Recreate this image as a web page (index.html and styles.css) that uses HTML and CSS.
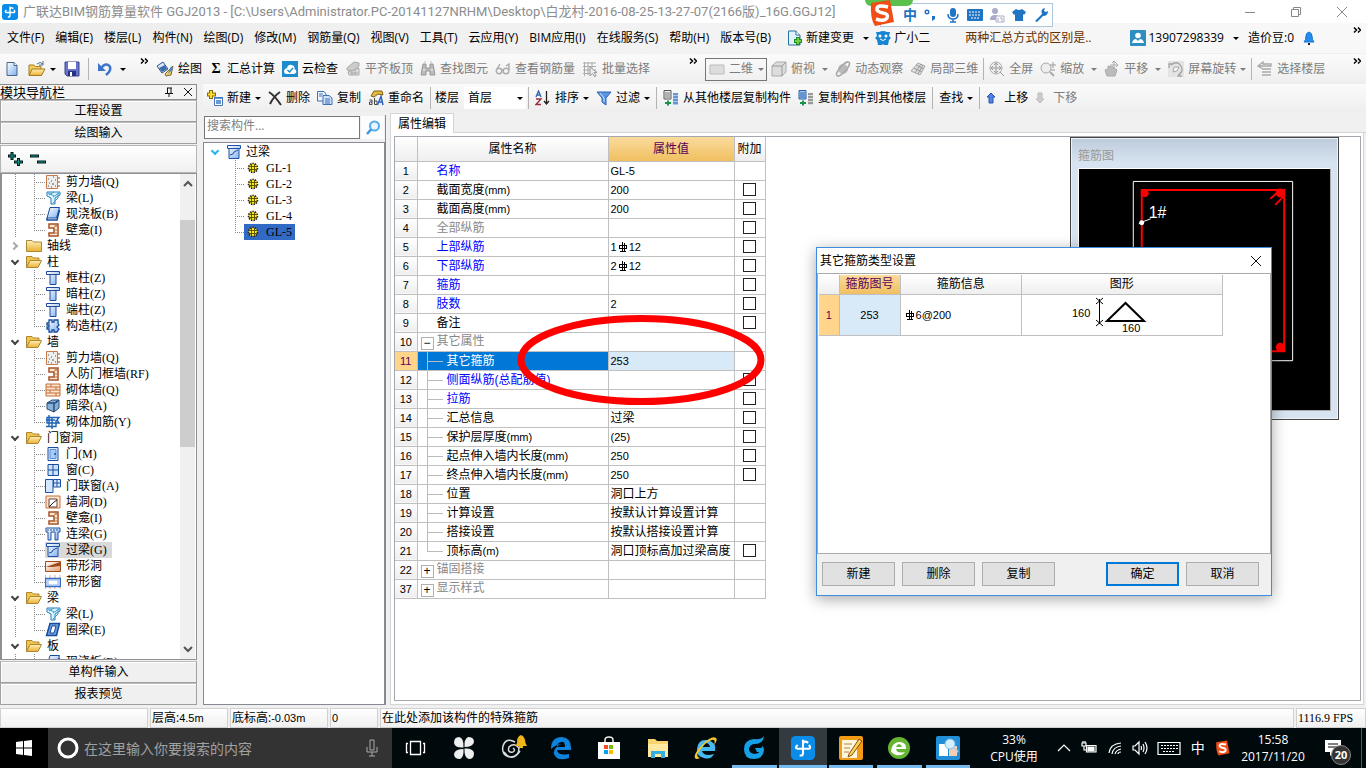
FILE: index.html
```html
<!DOCTYPE html>
<html lang="zh-CN">
<head>
<meta charset="utf-8">
<title>广联达BIM钢筋算量软件 GGJ2013</title>
<link rel="stylesheet" href="styles.css">
</head>
<body>
<svg class="sprite" aria-hidden="true">
<defs>
<linearGradient id="gBlue" x1="0" x2="1" y1="0" y2="1"><stop offset="0" stop-color="#fff"/><stop offset="1" stop-color="#7fb0f0"/></linearGradient>
<linearGradient id="gGold" x1="0" x2="0" y1="0" y2="1"><stop offset="0" stop-color="#fff0b8"/><stop offset="1" stop-color="#eab030"/></linearGradient>
<linearGradient id="gOrange" x1="0" x2="1" y1="0" y2="1"><stop offset="0" stop-color="#fff"/><stop offset="1" stop-color="#e0a070"/></linearGradient>
</defs>
<symbol id="logo" viewBox="0 0 16 16"><rect width="16" height="16" rx="3" fill="#0a8ce8"/><path d="M8 2.5V11.5Q8 13.5 5.8 12.8M11.5 4.5Q8 2.5 8 6M4.500 6Q2 8 4.500 8.500H12Q13.500 8 12 6" fill="none" stroke="#fff" stroke-width="1.4"/></symbol>
<symbol id="new" viewBox="0 0 16 16"><path d="M3 1.500H10L13 4.500V14.500H3Z" fill="url(#gBlue)" stroke="#4a6484"/><path d="M10 1.500V4.500H13" fill="#fff" stroke="#4a6484"/></symbol>
<symbol id="open" viewBox="0 0 18 16"><path d="M1 14V4H6L7.500 5.500H13V8" fill="#f4cf63" stroke="#a77a1d"/><path d="M1 14.500L4 8H17L13.500 14.500Z" fill="url(#gGold)" stroke="#a77a1d"/><path d="M9 3Q12 0 15 3M15 0V4H11" fill="none" stroke="#4b718c"/></symbol>
<symbol id="save" viewBox="0 0 16 16"><path d="M1 1H15V15H3L1 13Z" fill="#6673c8" stroke="#3d458e"/><path d="M4 1H12V8H4Z" fill="#fff"/><path d="M4 10H12V15H4Z" fill="#27307c"/><path d="M6 11H8V15H6Z" fill="#fff"/></symbol>
<symbol id="undo" viewBox="0 0 16 16"><path d="M4 7Q9 1 12.500 5Q15 9 9 14" fill="none" stroke="#3c74cc" stroke-width="2.500"/><path d="M1 2L1 10H9Z" fill="#3c74cc"/></symbol>
<symbol id="paint" viewBox="0 0 18 16"><path d="M1 5L7 1L12 8L6 12Z" fill="#dce7f5" stroke="#2c558c"/><path d="M3 7L9 4L11 8L6 11Z" fill="#3d6cac"/><path d="M9 13L17 5L15 14L10 15Z" fill="#f0cf60" stroke="#7b6840"/><path d="M15 5L17 8L12 13Z" fill="#4c84ca"/></symbol>
<symbol id="cloud" viewBox="0 0 16 16"><rect width="16" height="16" fill="#1d8bcc"/><path d="M4 13Q1 12 2.500 8.500Q4 7 5 7Q6 3 10 4Q13 5 12.500 8Q15 9 14 12L12 13Z" fill="#fff"/><path d="M5.500 9L7.500 11L11 7" fill="none" stroke="#1d8bcc" stroke-width="1.500"/></symbol>
<symbol id="align" viewBox="0 0 16 16"><path d="M2 7L9 1L14 2V5L8 10L2 9Z" fill="#ccc" stroke="#aaa"/><path d="M3 11L14 7V14H4Z" fill="#ddd" stroke="#aaa"/><path d="M5 12H13M7 10V14M10 9V14" stroke="#aaa"/></symbol>
<symbol id="binoc" viewBox="0 0 16 16"><path d="M3 3H6V7H10V3H13L15 14H10V10H6V14H1Z" fill="#bbb" stroke="#999"/><path d="M3 9H5M11 9H13M4 1H6M10 1H12" stroke="#ddd" stroke-width="2"/></symbol>
<symbol id="glasses" viewBox="0 0 16 16"><g fill="none" stroke="#aaa" stroke-width="1.400"><circle cx="4" cy="10" r="2.800"/><circle cx="11" cy="10" r="2.800"/><path d="M7 9H8M2 8L5 3M14 9V3L11 5"/></g></symbol>
<symbol id="batch" viewBox="0 0 16 16"><path d="M1 2H14M1 5.500H14M1 9H14M1 12.500H8M2.500 1V15M6 1V14M10 1V9" stroke="#aaa" fill="none"/><path d="M8 6V15L10.500 12.500L13 16L14 14L12 11.500H15Z" fill="#eee" stroke="#999"/></symbol>
<symbol id="rect" viewBox="0 0 16 16"><path d="M1 4H15V13H1Z" fill="#ddd" stroke="#bbb"/></symbol>
<symbol id="cube" viewBox="0 0 16 16"><path d="M1 5L5 1H15V11L11 15H1Z" fill="#ddd" stroke="#aaa"/><path d="M1 5H11V15M11 5L15 1" fill="none" stroke="#999"/></symbol>
<symbol id="orbit" viewBox="0 0 16 16"><circle cx="8" cy="8" r="5" fill="#bbb"/><ellipse cx="8" cy="8" rx="9" ry="3" transform="rotate(-48 8 8)" fill="none" stroke="#aaa" stroke-width="1.500"/></symbol>
<symbol id="local" viewBox="0 0 16 16"><path d="M1 10L8 2L15 5L10 14Z" fill="#ddd" stroke="#aaa"/><path d="M4 7L12 11M6 4L14 8M5 12L11 3M8 13L13 4" stroke="#999"/></symbol>
<symbol id="full" viewBox="0 0 16 16"><circle cx="7" cy="7" r="6" fill="#eee" stroke="#aaa"/><path d="M7 2V12M2 7H12M5 4L7 2L9 4M5 10L7 12L9 10M4 5L2 7L4 9M10 5L12 7L10 9M11 11L15 15" fill="none" stroke="#999"/></symbol>
<symbol id="zoomi" viewBox="0 0 16 16"><circle cx="6" cy="7" r="5" fill="#eee" stroke="#aaa"/><path d="M10 11L14 15" stroke="#aaa" stroke-width="2"/><path d="M13 1V7M10 4H16M11 9H15" stroke="#999"/></symbol>
<symbol id="pan" viewBox="0 0 16 16"><path d="M3 15L1 9L4 8L4 5L9 6L13 9L11 15Z" fill="#bbb" stroke="#aaa"/><path d="M10 0V8M6 4H14M8 2L10 0L12 2M12 2L14 4L12 6" fill="none" stroke="#aaa"/></symbol>
<symbol id="rotate" viewBox="0 0 16 16"><rect width="16" height="16" fill="#e4e4e4"/><path d="M3 4Q9-1 13 5Q16 11 10 14M1 7V3H5M13 11L10 15H14" fill="none" stroke="#a4a4a4" stroke-width="1.300"/><path d="M6 6L11 6L9 10L5 11Z" fill="#f4f4f4" stroke="#aaa"/></symbol>
<symbol id="floors" viewBox="0 0 16 16"><path d="M2 5H14V3H6V1L1 5L6 8M5 8H14M5 11H14M5 14H14" fill="none" stroke="#aaa" stroke-width="1.400"/></symbol>
<symbol id="newcomp" viewBox="0 0 16 16"><path d="M4 0V9M0 4.500H9" stroke="#8a6a10" stroke-width="4"/><path d="M4 1V8M1 4.500H8" stroke="#ffdc30" stroke-width="2"/><path d="M7.500 7.500H15.500V15.500H7.500Z" fill="#fff" stroke="#4677b8"/><path d="M7 8H16M9 11H14M9 13H14" stroke="#3d78c6" stroke-width="1.500"/></symbol>
<symbol id="del" viewBox="0 0 14 16"><path d="M1 2Q7 6 13 15M12 2Q6 6 2 14" fill="none" stroke="#333" stroke-width="2"/></symbol>
<symbol id="copy" viewBox="0 0 16 16"><path d="M.5 1.500H7L9 4V11H.5Z" fill="#eef4ff" stroke="#3e70b4"/><path d="M6 5.500H12L15 8V14.500H6Z" fill="#cfe1fb" stroke="#3e70b4"/><path d="M2 4H6M2 6H5M8 9H13M8 11H13M8 13H13" stroke="#3e70b4"/></symbol>
<symbol id="rename" viewBox="0 0 16 16"><path d="M3 6L6 1H14L15 5L10 4L6 7Z" fill="#e4bc42" stroke="#806010"/><path d="M1.500 10H4V14.500H1.500V12H4M6.500 8V14.500H9V11H6.500" fill="none" stroke="#444"/><path d="M9.500 15L13 6.500L15 15M11 12H15" fill="none" stroke="#2c62c4" stroke-width="1.500"/></symbol>
<symbol id="az" viewBox="0 0 16 16"><path d="M1 7L3.500 1L6 7M2 5H5" fill="none" stroke="#3968a8" stroke-width="1.400"/><path d="M1 9H6L1 14.500H6" fill="none" stroke="#98303e" stroke-width="1.400"/><path d="M11.500 1V14M9 11L11.500 14L14 11" fill="none" stroke="#222" stroke-width="1.300"/></symbol>
<symbol id="filter" viewBox="0 0 16 16"><path d="M1 2H15L10 8V15L6 12V8Z" fill="#5b95e0" stroke="#2c62b4"/><path d="M4 3L8 8V12" stroke="#cfe4ff" fill="none"/></symbol>
<symbol id="cfrom" viewBox="0 0 16 16"><path d="M1 .5H8V9H1Z" fill="#eee" stroke="#555"/><path d="M2 3H7M2 5H7M2 7H7" stroke="#777"/><path d="M2 13H8M5 10.500V15.500" stroke="#19964b" stroke-width="2"/><path d="M10 3H15V15H10Z" fill="#a9caf4"/><path d="M10 4H15M10 7H15M10 10H15M10 13H15" stroke="#245fad"/></symbol>
<symbol id="cto" viewBox="0 0 16 16"><path d="M1 .5H8V9H1Z" fill="#a9caf4" stroke="#245fad"/><path d="M2 3H7M2 5H7M2 7H7" stroke="#245fad"/><path d="M2 13H8M5 10.500V15.500" stroke="#19964b" stroke-width="2"/><path d="M10 3H15V15H10Z" fill="#ddd"/><path d="M10 4H15M10 7H15M10 10H15M10 13H15" stroke="#555"/></symbol>
<symbol id="up" viewBox="0 0 10 12"><path d="M5 1L9 5H7V11H3V5H1Z" fill="#4e82e8" stroke="#2552b0"/></symbol>
<symbol id="down" viewBox="0 0 10 12"><path d="M5 11L9 7H7V1H3V7H1Z" fill="#ccc" stroke="#bbb"/></symbol>
<symbol id="change" viewBox="0 0 16 16"><path d="M1.500 1H9L13 5V15H1.500Z" fill="#dff1ff" stroke="#2b6f9c"/><path d="M9 1V5H13" fill="#fff" stroke="#2b6f9c"/><path d="M11 7V15M7 11H15" stroke="#238b23" stroke-width="4"/><path d="M11 8V14M8 11H14" stroke="#70cf45" stroke-width="2"/></symbol>
<symbol id="owl" viewBox="0 0 16 16"><path d="M1 2L4 2Q8 0 12 2L15 2L14 6L16 8L14 10L13 15H9L8 14L7 15H3L2 10L0 8L2 6Z" fill="#1686d3"/><circle cx="5" cy="6" r="1.500" fill="#fff"/><circle cx="11" cy="6" r="1.500" fill="#fff"/><path d="M5 9Q8 12 11 9" fill="none" stroke="#fff"/></symbol>
<symbol id="user" viewBox="0 0 16 16"><rect width="16" height="16" rx="1" fill="#2d8ec2"/><circle cx="8" cy="5.500" r="2.800" fill="#fff"/><path d="M2 13Q3 9 6 9L8 11L10 9Q13 9 14 13Z" fill="#fff"/></symbol>
<symbol id="bell" viewBox="0 0 12 16"><path d="M1 12Q3 10 3 6Q3 3 6 2Q9 3 9 6Q9 10 11 12Z" fill="#258cf0" stroke="#1772d2"/><path d="M5 13H7V15H5Z" fill="#222"/></symbol>
<symbol id="folder" viewBox="0 0 16 16"><path d="M.5 13.500V2.500H6L7.500 4H15.500V13.500Z" fill="url(#gGold)" stroke="#a98934"/></symbol>
<symbol id="folderopen" viewBox="0 0 16 16"><path d="M.5 13.500V2.500H6L7.500 4H13V7" fill="#f2c44c" stroke="#a98934"/><path d="M.5 13.500L4 6.500H15.500L12 13.500Z" fill="url(#gGold)" stroke="#a98934"/></symbol>
<symbol id="wall" viewBox="0 0 16 16"><path d="M1.500 1.500H12.500V14.500H1.500Z" fill="#eee" stroke="#c77b48"/><path d="M13 4H15M13 8H15M13 12H15" stroke="#d07b3e" stroke-width="1.500"/><path d="M3 5H4M8 3H9M6 7H7M10 6H11M4 9H5M7 10H9M10 12H11M3 12H4M6 13H7" stroke="#555"/></symbol>
<symbol id="beam" viewBox="0 0 16 16"><path d="M2 2H15V5L10 8V14H6V8L2 6Z" fill="#dff2ff" stroke="#237eb9"/><path d="M4 5L9 2M8 7L14 3M8 13L13 8V3M3 3L9 6" stroke="#3a9ad4" fill="none"/></symbol>
<symbol id="slab" viewBox="0 0 16 16"><path d="M5 1.500H14.500L11.500 12H2Z" fill="url(#gBlue)" stroke="#164d9e"/><path d="M2 12V14H12L14.500 4" fill="none" stroke="#164d9e" stroke-width="1.500"/></symbol>
<symbol id="niche" viewBox="0 0 16 16"><path d="M4 2H13V14H4V11H9V6H4Z" fill="#f8e9da" stroke="#a95324" stroke-width="1.500"/><path d="M9 4H13M9 8H13M9 11H13M11 2V5" stroke="#bd7443"/></symbol>
<symbol id="column" viewBox="0 0 16 16"><path d="M1.500 1.500H14.500V4.500H11V14.500H5V4.500H1.500Z" fill="url(#gBlue)" stroke="#204a9a"/><path d="M2 4.500H14" stroke="#204a9a"/></symbol>
<symbol id="gcol" viewBox="0 0 16 16"><path d="M4 2H7V4H9V2H13V5L14 7L12 9L14 11L12 14H9V12H7V14H4V11H2V9H4V7H2V5H4Z" fill="url(#gBlue)" stroke="#164d9e" stroke-width="1.300"/></symbol>
<symbol id="brick" viewBox="0 0 16 16"><path d="M1 2H15V14H1Z" fill="#fbe4d0" stroke="#c56e38"/><path d="M1 5H15M1 8H15M1 11H15M6 2V5M11 5V8M5 8V11M11 11V14" stroke="#c56e38"/></symbol>
<symbol id="dbeam" viewBox="0 0 16 16"><path d="M2 5L7 2H14L11 5ZM2 5H9V14L2 11ZM9 5L14 2V10L9 14Z" fill="#8ab0d8" stroke="#244d7d"/></symbol>
<symbol id="rwall" viewBox="0 0 16 16"><path d="M2 3.500H14L12 6L14 9H2ZM4 1V12M1 12.500H11V6M7 3V15M1 6H10" fill="none" stroke="#1c62b4" stroke-width="1.400"/></symbol>
<symbol id="door" viewBox="0 0 16 16"><path d="M3 1.500H13V14.500H3Z" fill="#dceaff" stroke="#164d9e"/><path d="M5 3.500H11V12.500H5Z" fill="#a7cbfa" stroke="#5f91d4"/><circle cx="10" cy="8" r="1" fill="#164d9e"/></symbol>
<symbol id="window" viewBox="0 0 16 16"><path d="M3 2.500H13.500V13.500H3Z" fill="#cfe2fd" stroke="#164d9e"/><path d="M8 3V13M3 8H13" stroke="#164d9e"/></symbol>
<symbol id="doorwin" viewBox="0 0 16 16"><path d="M.5 1.500H8V14.500H.5ZM8.500 1.500H15.500V9H8.500Z" fill="#d5e7ff" stroke="#1e50a5"/><path d="M12 1V9M9 5H15" fill="none" stroke="#1e50a5"/></symbol>
<symbol id="hole" viewBox="0 0 16 16"><path d="M1 2H15V14H1Z" fill="#fbe4d0" stroke="#c56e38"/><path d="M4 5H12V13H4Z" fill="#fff" stroke="#6c4230"/><path d="M4 13L9 8L12 6" fill="none" stroke="#222"/></symbol>
<symbol id="link" viewBox="0 0 16 16"><path d="M1 2H15V6H13V14H10V6H6V14H3V6H1Z" fill="url(#gBlue)" stroke="#1e50a5"/><path d="M2 4H14" stroke="#1e50a5" stroke-dasharray="2 1"/></symbol>
<symbol id="lintel" viewBox="0 0 16 16"><path d="M1.500 1.500H14.500V4.500H13V14.500H3V4.500H1.500Z" fill="url(#gBlue)" stroke="#1e50a5"/><path d="M2 4.500H14M4 11L7 10L8 8L12 6" fill="none" stroke="#1e50a5"/></symbol>
<symbol id="shole" viewBox="0 0 16 16"><path d="M.5 3.500H15.500V13.500H.5Z" fill="url(#gOrange)" stroke="#a14b1c"/><path d="M1 9L15 4V8L7 9Z" fill="#9e481d"/></symbol>
<symbol id="swin" viewBox="0 0 16 16"><path d="M.5 1V15M5 1V15M10 1V15M15 1V15" stroke="#f1aa92"/><path d="M.5 4.500H15.500V12.500H.5Z" fill="#dceaff" stroke="#386cc4" stroke-width="1.500"/><path d="M3 6H13V11H3Z" fill="#fff" stroke="#8ab3f0"/></symbol>
<symbol id="ring" viewBox="0 0 16 16"><path d="M5 1.500H14.500L11.500 13.500H1.500Z" fill="#6e9cdc" stroke="#164d9e" stroke-width="1.500"/><path d="M7 4H11L9 11H5Z" fill="#fff" stroke="#164d9e"/></symbol>
<symbol id="gear" viewBox="0 0 12 12"><circle cx="6" cy="6" r="4.500" fill="#ffee20" stroke="#222" stroke-width="1.600" stroke-dasharray="1.500 1"/><path d="M4.500 2V10M7.500 2V10M2 4.500H10M2 7.500H10" stroke="#5c5500"/></symbol>
<symbol id="rebar" viewBox="0 0 10 12"><path d="M1.500 4.500H8.500V7.500H1.500ZM4.500 1V10M6.500 2V10M2 10.500H8" fill="none" stroke="#000" shape-rendering="crispEdges"/></symbol>
<symbol id="sogou" viewBox="0 0 28 28"><path d="M4 4L23 1L27 23L8 27Q3 20 4 4Z" fill="#f04e16"/><path d="M21 8Q9 5 10 11Q11 13 16 14Q22 15 20 19Q17 23 9 20" fill="none" stroke="#fff" stroke-width="3.500"/></symbol>
</svg>

<header class="titlebar">
  <svg class="i16"><use href="#logo"/></svg>
  <h1>广联达BIM钢筋算量软件 GGJ2013 - [C:\Users\Administrator.PC-20141127NRHM\Desktop\白龙村-2016-08-25-13-27-07(2166版)_16G.GGJ12]</h1>
  <div class="winbtns">
    <button aria-label="最小化"><svg viewBox="0 0 12 12"><path d="M1 6.500H11"/></svg></button>
    <button aria-label="还原"><svg viewBox="0 0 12 12"><path d="M1.500 3.500H8.500V10.500H1.500ZM3.500 3V1.500H10.500V8.500H9"/></svg></button>
    <button aria-label="关闭"><svg viewBox="0 0 12 12"><path d="M1 1L11 11M11 1L1 11"/></svg></button>
  </div>
</header>

<nav class="menubar">
  <button>文件(F)</button><button>编辑(E)</button><button>楼层(L)</button><button>构件(N)</button><button>绘图(D)</button><button>修改(M)</button><button>钢筋量(Q)</button><button>视图(V)</button><button>工具(T)</button><button>云应用(Y)</button><button>BIM应用(I)</button><button>在线服务(S)</button><button>帮助(H)</button><button>版本号(B)</button>
  <button class="change"><svg class="i16"><use href="#change"/></svg>新建变更<span class="caret wide"></span></button>
  <button><svg class="i16"><use href="#owl"/></svg>广小二</button>
  <a class="tip" href="#">两种汇总方式的区别是..</a>
  <div class="account">
    <button><svg class="i16"><use href="#user"/></svg>13907298339<span class="caret wide"></span></button>
    <span>造价豆:0</span>
    <button aria-label="通知"><svg class="bell"><use href="#bell"/></svg></button>
  </div>
  <button class="more" aria-label="更多"><svg viewBox="0 0 8 6"><path d="M1 .5L3.500 3L1 5.500M5 .5L7.500 3L5 5.500"/></svg></button>
</nav>

<div class="toolbar main-tools">
  <div class="group files">
    <button aria-label="新建"><svg class="i16"><use href="#new"/></svg></button>
    <button aria-label="打开"><svg class="i18"><use href="#open"/></svg><span class="caret"></span></button>
    <button aria-label="保存"><svg class="i16"><use href="#save"/></svg></button>
    <span class="sep"></span>
    <button aria-label="撤销"><svg class="i16"><use href="#undo"/></svg><span class="caret wide"></span></button>
    <button class="more" aria-label="更多"><svg viewBox="0 0 8 6"><path d="M1 .5L3.500 3L1 5.500M5 .5L7.500 3L5 5.500"/></svg></button>
  </div>
  <div class="group edit">
    <button><svg class="i18"><use href="#paint"/></svg>绘图</button>
    <button><b class="sigma">Σ</b>汇总计算</button>
    <button><svg class="i16"><use href="#cloud"/></svg>云检查</button>
    <button disabled><svg class="i16"><use href="#align"/></svg>平齐板顶</button>
    <button disabled><svg class="i16"><use href="#binoc"/></svg>查找图元</button>
    <button disabled><svg class="i16"><use href="#glasses"/></svg>查看钢筋量</button>
    <button disabled><svg class="i16"><use href="#batch"/></svg>批量选择</button>
    <button class="more" aria-label="更多"><svg viewBox="0 0 8 6"><path d="M1 .5L3.500 3L1 5.500M5 .5L7.500 3L5 5.500"/></svg></button>
  </div>
  <div class="group view">
    <label class="viewsel"><svg class="i16"><use href="#rect"/></svg><select disabled aria-label="视图模式"><option>二维</option></select><span class="caret"></span></label>
    <button disabled><svg class="i16"><use href="#cube"/></svg>俯视<span class="caret wide"></span></button>
    <button disabled><svg class="i16"><use href="#orbit"/></svg>动态观察</button>
    <button disabled><svg class="i16"><use href="#local"/></svg>局部三维</button>
    <span class="sep"></span>
    <button disabled><svg class="i16"><use href="#full"/></svg>全屏</button>
    <button disabled><svg class="i16"><use href="#zoomi"/></svg>缩放<span class="caret wide"></span></button>
    <button disabled><svg class="i16"><use href="#pan"/></svg>平移<span class="caret wide"></span></button>
    <button disabled><svg class="i16"><use href="#rotate"/></svg>屏幕旋转<span class="caret"></span></button>
    <span class="sep"></span>
    <button disabled><svg class="i16"><use href="#floors"/></svg>选择楼层</button>
    <button class="more" aria-label="更多"><svg viewBox="0 0 8 6"><path d="M1 .5L3.500 3L1 5.500M5 .5L7.500 3L5 5.500"/></svg></button>
  </div>
</div>

<main class="workspace">
  <aside class="modules">
    <div class="panel-head"><h2>模块导航栏</h2>
      <button aria-label="固定"><svg viewBox="0 0 10 10"><path d="M3.500 1V6M7 1V6M3 1H8M1 6.500H9M5 7V10"/></svg></button>
      <button aria-label="关闭"><svg viewBox="0 0 10 10"><path d="M1 1L9 9M9 1L1 9"/></svg></button>
    </div>
    <button class="section">工程设置</button>
    <button class="section">绘图输入</button>
    <div class="tree-tools">
      <button aria-label="全部展开"><svg viewBox="0 0 16 16"><path d="M5 1V9M1 5H9M11.500 7V15M7 11H16" stroke="#001a1a" stroke-width="3"/><path d="M5 2V8M2 5H8M11.500 8V14M8 11H15" stroke="#14918a"/></svg></button>
      <button aria-label="全部折叠"><svg viewBox="0 0 16 16"><path d="M0 5H9M7 11H16" stroke="#001a1a" stroke-width="3"/><path d="M1 5H8M8 11H15" stroke="#14918a"/></svg></button>
    </div>
    <div class="tree-box">
      <ul class="tree">
        <li class="leaf"><svg><use href="#wall"/></svg>剪力墙(Q)</li>
        <li class="leaf"><svg><use href="#beam"/></svg>梁(L)</li>
        <li class="leaf"><svg><use href="#slab"/></svg>现浇板(B)</li>
        <li class="leaf last"><svg><use href="#niche"/></svg>壁龛(I)</li>
        <li class="branch closed"><i></i><svg><use href="#folder"/></svg>轴线</li>
        <li class="branch"><i></i><svg><use href="#folderopen"/></svg>柱</li>
        <li class="leaf"><svg><use href="#column"/></svg>框柱(Z)</li>
        <li class="leaf"><svg><use href="#column"/></svg>暗柱(Z)</li>
        <li class="leaf"><svg><use href="#column"/></svg>端柱(Z)</li>
        <li class="leaf last"><svg><use href="#gcol"/></svg>构造柱(Z)</li>
        <li class="branch"><i></i><svg><use href="#folderopen"/></svg>墙</li>
        <li class="leaf"><svg><use href="#wall"/></svg>剪力墙(Q)</li>
        <li class="leaf"><svg><use href="#niche"/></svg>人防门框墙(RF)</li>
        <li class="leaf"><svg><use href="#brick"/></svg>砌体墙(Q)</li>
        <li class="leaf"><svg><use href="#dbeam"/></svg>暗梁(A)</li>
        <li class="leaf last"><svg><use href="#rwall"/></svg>砌体加筋(Y)</li>
        <li class="branch"><i></i><svg><use href="#folderopen"/></svg>门窗洞</li>
        <li class="leaf"><svg><use href="#door"/></svg>门(M)</li>
        <li class="leaf"><svg><use href="#window"/></svg>窗(C)</li>
        <li class="leaf"><svg><use href="#doorwin"/></svg>门联窗(A)</li>
        <li class="leaf"><svg><use href="#hole"/></svg>墙洞(D)</li>
        <li class="leaf"><svg><use href="#niche"/></svg>壁龛(I)</li>
        <li class="leaf"><svg><use href="#link"/></svg>连梁(G)</li>
        <li class="leaf"><span class="current"><svg><use href="#lintel"/></svg>过梁(G)</span></li>
        <li class="leaf"><svg><use href="#shole"/></svg>带形洞</li>
        <li class="leaf last"><svg><use href="#swin"/></svg>带形窗</li>
        <li class="branch"><i></i><svg><use href="#folderopen"/></svg>梁</li>
        <li class="leaf"><svg><use href="#beam"/></svg>梁(L)</li>
        <li class="leaf last"><svg><use href="#ring"/></svg>圈梁(E)</li>
        <li class="branch"><i></i><svg><use href="#folderopen"/></svg>板</li>
        <li class="leaf"><svg><use href="#slab"/></svg>现浇板(B)</li>
      </ul>
      <div class="scroll"><svg viewBox="0 0 10 8"><path d="M1 6L5 2L9 6"/></svg><div class="thumb"></div><svg viewBox="0 0 10 8"><path d="M1 2L5 6L9 2"/></svg></div>
    </div>
    <button class="section">单构件输入</button>
    <button class="section">报表预览</button>
  </aside>

  <div class="content">
    <div class="toolbar comp-tools">
      <button><svg class="i16"><use href="#newcomp"/></svg>新建<span class="caret"></span></button>
      <button><svg class="i14"><use href="#del"/></svg>删除</button>
      <button><svg class="i16"><use href="#copy"/></svg>复制</button>
      <button><svg class="i16"><use href="#rename"/></svg>重命名</button>
      <span class="sep"></span>
      <label class="floor">楼层<span class="combo"><select aria-label="楼层"><option>首层</option></select><span class="caret"></span></span></label>
      <span class="sep"></span>
      <button><svg class="i16"><use href="#az"/></svg>排序<span class="caret"></span></button>
      <button><svg class="i16"><use href="#filter"/></svg>过滤<span class="caret"></span></button>
      <span class="sep"></span>
      <button><svg class="i16"><use href="#cfrom"/></svg>从其他楼层复制构件</button>
      <button><svg class="i16"><use href="#cto"/></svg>复制构件到其他楼层</button>
      <span class="sep"></span>
      <button>查找<span class="caret"></span></button>
      <span class="sep"></span>
      <button class="move"><svg><use href="#up"/></svg>上移</button>
      <button class="move" disabled><svg><use href="#down"/></svg>下移</button>
    </div>
    <div class="panes">
      <section class="components">
        <div class="search"><input type="text" placeholder="搜索构件..." aria-label="搜索构件"><button aria-label="搜索"><svg viewBox="0 0 16 16"><circle cx="9.500" cy="6" r="4.500" fill="#eaf6ff" stroke="#55ace8" stroke-width="2"/><path d="M6 9.500L2 14" stroke="#3a94dc" stroke-width="2.500"/></svg></button></div>
        <ul class="comp-tree">
          <li class="root"><i></i><svg><use href="#lintel"/></svg>过梁</li>
          <li><span><svg><use href="#gear"/></svg>GL-1</span></li>
          <li><span><svg><use href="#gear"/></svg>GL-2</span></li>
          <li><span><svg><use href="#gear"/></svg>GL-3</span></li>
          <li><span><svg><use href="#gear"/></svg>GL-4</span></li>
          <li class="last"><span class="sel"><svg><use href="#gear"/></svg>GL-5</span></li>
        </ul>
      </section>
      <section class="editor">
        <div class="tabs"><button class="tab">属性编辑</button></div>
        <div class="sheet"><div class="sheet-in">
          <table class="props">
            <colgroup><col class="c-no"><col class="c-name"><col class="c-val"><col class="c-add"></colgroup>
            <thead><tr><th></th><th>属性名称</th><th class="hot">属性值</th><th>附加</th></tr></thead>
            <tbody>
              <tr><th>1</th><td class="n blue">名称</td><td>GL-5</td><td></td></tr>
              <tr><th>2</th><td class="n">截面宽度<small>(mm)</small></td><td>200</td><td><input type="checkbox" aria-label="附加 2"></td></tr>
              <tr><th>3</th><td class="n">截面高度<small>(mm)</small></td><td>200</td><td><input type="checkbox" aria-label="附加 3"></td></tr>
              <tr><th>4</th><td class="n gray">全部纵筋</td><td></td><td><input type="checkbox" aria-label="附加 4"></td></tr>
              <tr><th>5</th><td class="n blue">上部纵筋</td><td>1<svg class="rebar"><use href="#rebar"/></svg>12</td><td><input type="checkbox" aria-label="附加 5"></td></tr>
              <tr><th>6</th><td class="n blue">下部纵筋</td><td>2<svg class="rebar"><use href="#rebar"/></svg>12</td><td><input type="checkbox" aria-label="附加 6"></td></tr>
              <tr><th>7</th><td class="n blue">箍筋</td><td></td><td><input type="checkbox" aria-label="附加 7"></td></tr>
              <tr><th>8</th><td class="n blue">肢数</td><td>2</td><td><input type="checkbox" aria-label="附加 8"></td></tr>
              <tr><th>9</th><td class="n">备注</td><td></td><td><input type="checkbox" aria-label="附加 9"></td></tr>
              <tr><th>10</th><td class="g gray"><button>−</button>其它属性</td><td></td><td></td></tr>
              <tr class="active"><th>11</th><td class="s">其它箍筋</td><td>253</td><td></td></tr>
              <tr><th>12</th><td class="s blue">侧面纵筋(总配筋值)</td><td></td><td><input type="checkbox" aria-label="附加 12"></td></tr>
              <tr><th>13</th><td class="s blue">拉筋</td><td></td><td><input type="checkbox" aria-label="附加 13"></td></tr>
              <tr><th>14</th><td class="s">汇总信息</td><td class="zh">过梁</td><td><input type="checkbox" aria-label="附加 14"></td></tr>
              <tr><th>15</th><td class="s">保护层厚度<small>(mm)</small></td><td>(25)</td><td><input type="checkbox" aria-label="附加 15"></td></tr>
              <tr><th>16</th><td class="s">起点伸入墙内长度<small>(mm)</small></td><td>250</td><td><input type="checkbox" aria-label="附加 16"></td></tr>
              <tr><th>17</th><td class="s">终点伸入墙内长度<small>(mm)</small></td><td>250</td><td><input type="checkbox" aria-label="附加 17"></td></tr>
              <tr><th>18</th><td class="s">位置</td><td class="zh">洞口上方</td><td></td></tr>
              <tr><th>19</th><td class="s">计算设置</td><td class="zh">按默认计算设置计算</td><td></td></tr>
              <tr><th>20</th><td class="s">搭接设置</td><td class="zh">按默认搭接设置计算</td><td></td></tr>
              <tr><th>21</th><td class="s end">顶标高<small>(m)</small></td><td class="zh">洞口顶标高加过梁高度</td><td><input type="checkbox" aria-label="附加 21"></td></tr>
              <tr><th>22</th><td class="g gray"><button>+</button>锚固搭接</td><td></td><td></td></tr>
              <tr><th>37</th><td class="g gray"><button>+</button>显示样式</td><td></td><td></td></tr>
            </tbody>
          </table>
          <svg class="mark" viewBox="0 0 248 92"><ellipse cx="124" cy="46" rx="120" ry="41.500" fill="none" stroke="#f00" stroke-width="7"/></svg>
        </div></div>
      </section>
    </div>
  </div>
</main>

<footer class="status"><span class="s1"></span><span class="s2">层高:<small>4.5m</small></span><span class="s3">底标高:<small>-0.03m</small></span><span class="s4"><small>0</small></span><span class="s5">在此处添加该构件的特殊箍筋</span><span class="s6">1116.9 FPS</span></footer>

<footer class="taskbar">
  <button class="start" aria-label="开始"><svg viewBox="0 0 16 16"><path d="M0 2L7 1V7.500H0ZM8 1L16 0V7.500H8ZM0 8.500H7V15L0 14ZM8 8.500H16V16L8 15Z" fill="#fff"/></svg></button>
  <label class="cortana"><svg class="ring" viewBox="0 0 22 22"><circle cx="11" cy="11" r="9" fill="none" stroke="#fff" stroke-width="3"/></svg><input type="text" placeholder="在这里输入你要搜索的内容" aria-label="搜索"><svg class="mic" viewBox="0 0 12 18"><path d="M4 1H8V11H4ZM1 8V13H11V8M6 13V17M3 17H9" fill="none" stroke="#aaa"/></svg></label>
  <div class="apps">
    <button aria-label="任务视图"><svg viewBox="0 0 24 24"><path d="M6.500 5.500H16.500V18.500H6.500ZM4 7.500H2.500V16.500H4M19 7.500H20.500V16.500H19" fill="none" stroke="#fff" stroke-width="1.300"/></svg></button>
    <button aria-label="应用"><svg viewBox="0 0 24 24"><g fill="#eee"><path d="M11.500 11.500Q3 12 2 7Q2 1 7 1Q12 2 11.500 11.500Z"/><path d="M12.500 11Q12 3 16 1Q22 1 22 6Q21 11 12.500 11Z"/><path d="M12.500 12.500Q21 12 22 17Q22 23 17 23Q12 22 12.500 12.500Z"/><path d="M11.500 13Q12 21 8 23Q2 23 2 18Q3 13 11.500 13Z"/></g></svg></button>
    <button aria-label="消息"><svg viewBox="0 0 32 32"><path d="M18 10Q9 5 6 14Q4 23 13 25Q22 25 22 16Q17 10 12 15Q10 21 16 20Q19 18 16 16M7 20Q15 31 23 19" fill="none" stroke="#ddd" stroke-width="1.500"/><path d="M18 14Q21 11 20 8Q21 4 24 3Q27 4 28 8Q28 11 30 14ZM22 14H26V16H22Z" fill="#f0b516"/></svg></button>
    <button aria-label="Edge"><svg viewBox="0 0 24 24"><path d="M2 13Q2 1 13 1Q23 2 22 14H8Q9 20 20 18V22Q8 26 5 18Q4 12 12 8Q6 9 2 13ZM8 11H16Q16 5 12 6Q8 7 8 11Z" fill="#0b84df"/></svg></button>
    <button aria-label="应用商店"><svg viewBox="0 0 24 24"><path d="M8 7V4Q8 1 12 1Q16 1 16 4V7" fill="none" stroke="#eee" stroke-width="1.500"/><path d="M1 6H23V23H1Z" fill="#fff"/><path d="M7 9H11V13H7Z" fill="#f04e23"/><path d="M12 9H16V13H12Z" fill="#7db700"/><path d="M7 14H11V18H7Z" fill="#00a3ee"/><path d="M12 14H16V18H12Z" fill="#fbb900"/></svg></button>
    <button aria-label="文件资源管理器"><svg viewBox="0 0 24 24"><path d="M2 3H9L11 5H22V21H2Z" fill="#f8d46c"/><path d="M2 8H22V21H2Z" fill="#ffe9a0"/><path d="M5 22V15H19V22H15V18H9V22Z" fill="#35aee3"/></svg></button>
    <button aria-label="Internet Explorer"><svg viewBox="0 0 24 24"><path d="M3 13Q4 3 13 4Q23 6 21 15H8Q10 21 20 18Q17 24 10 22Q2 20 3 13ZM8 11H16Q15 7 12 7Q9 7 8 11Z" fill="#46b9f1"/><path d="M1 22Q-1 18 9 8Q18-1 22 2Q24 4 20 9Q22 3 18 4Q12 5 4 17Q2 21 6 22Q2 24 1 22Z" fill="#f5c52e"/></svg></button>
    <button class="run" aria-label="广联达"><svg viewBox="0 0 24 24"><path d="M22 0Q19 4 12 3Q2 4 2 13Q2 23 12 23Q21 23 22 14Q22 11 20 10Q19 18 12 18Q7 17 7 13Q8 8 13 8Q21 8 22 0Z" fill="#16a0e8"/><path d="M13 12H20V16H15Z" fill="#16a0e8"/></svg></button>
    <button class="run on" aria-label="钢筋算量"><svg viewBox="0 0 16 16"><use href="#logo"/></svg></button>
    <button class="run" aria-label="文档"><svg viewBox="0 0 24 24"><rect width="24" height="24" rx="2" fill="#f39a17"/><path d="M3 4H18V22H3Z" fill="#fff7dc"/><path d="M5 8H13M5 12H11M5 16H10" stroke="#b58240"/><path d="M10 18L20 3L23 5L13 19L9 21Z" fill="#fbd35a" stroke="#884c12"/></svg></button>
    <button class="run" aria-label="浏览器"><svg viewBox="0 0 24 24"><circle cx="12" cy="12" r="11" fill="#65b532"/><path d="M4 15Q5 6 13 6Q20 7 19 13H9Q10 18 18 16Q15 20 9 19Q3 16 4 15ZM9 11H15Q14 8 12 8Q10 8 9 11Z" fill="#fff"/></svg></button>
    <button class="run" aria-label="查看器"><svg viewBox="0 0 24 24"><rect width="24" height="24" rx="2" fill="#218ed8"/><path d="M3 8H12V20H3Z" fill="#fff"/><path d="M13 10H21V20H13Z" fill="#f3d0b3"/><circle cx="14" cy="8" r="5" fill="#d4efff" stroke="#83bce6"/><path d="M18 12L22 16" stroke="#ccc" stroke-width="2"/></svg></button>
  </div>
  <div class="cpu"><span>33%</span><span>CPU使用</span></div>
  <div class="tray">
    <svg viewBox="0 0 16 16"><path d="M2 11L8 5L14 11"/></svg>
    <svg viewBox="0 0 16 16"><path d="M5.500 5.500H15V12H5.500Z" /><path d="M7 7H13V11H7Z" fill="#fff"/><path d="M1 3H5V6H1ZM2 1V3M4 1V3M3 6V10H5"/></svg>
    <svg viewBox="0 0 16 16"><path d="M2 13Q3 4 14 3M5 14Q6 7 14 6M8 14Q9 10 14 9M11 14Q11 12 14 12"/></svg>
    <svg viewBox="0 0 16 16"><path d="M1 6H3L7 2V14L3 10H1ZM9 6Q10 8 9 10M11 4Q13 8 11 12M13 2Q17 8 13 14"/></svg>
    <svg class="kb" viewBox="0 0 24 16"><path d="M1 2.500H23V14.500H1Z"/><path d="M6 11.500H18M4 5.500H21M4 8.500H21" stroke-dasharray="2 1"/></svg>
    <span class="ime">中</span>
    <svg class="sg"><use href="#sogou"/></svg>
  </div>
  <div class="clock"><span>15:58</span><span>2017/11/20</span></div>
  <button class="notice" aria-label="通知"><svg viewBox="0 0 18 18"><path d="M1 1H17V13H10L6 17V13H1Z" fill="#fff"/><path d="M4 5H14M4 8H14" stroke="#000"/></svg><b>20</b></button>
</footer>

<aside class="imebar">
  <svg class="sglogo"><use href="#sogou"/></svg>
  <b>中</b>
  <svg viewBox="0 0 16 16"><circle cx="4" cy="5" r="1.800" fill="none" stroke="#1f74c4" stroke-width="1.400"/><path d="M9 9H12V12L9 14" fill="#1f74c4"/></svg>
  <svg viewBox="0 0 16 16"><rect x="5" y="1" width="6" height="9" rx="3" fill="#1f74c4"/><path d="M3 7Q3 12 8 12Q13 12 13 7M8 12V15M5 15H11" fill="none" stroke="#1f74c4" stroke-width="1.500"/></svg>
  <svg viewBox="0 0 16 16"><rect y="2" width="16" height="12" rx="1" fill="#1f74c4"/><path d="M2 5H14M2 8H14M4 11H12" stroke="#fff" stroke-dasharray="2 1"/></svg>
  <svg viewBox="0 0 16 16"><circle cx="6" cy="4" r="3" fill="#aac"/><path d="M1 13Q1 8 6 8Q9 8 10 10V13Z" fill="#aac"/><path d="M7 9H15V15H7Z" fill="#fff" stroke="#aac"/><path d="M9 11V14M11 11H13V14" stroke="#aac" fill="none"/></svg>
  <svg viewBox="0 0 16 16"><path d="M5 2Q8 4 11 2L15 5L13 8L12 7V14H4V7L3 8L1 5Z" fill="#1f74c4"/></svg>
  <svg viewBox="0 0 16 16"><path d="M2 14L9 7Q7 2 12 1L11 4L13 5L15 4Q15 9 10 9L4 15Z" fill="#1f74c4"/></svg>
</aside>

<section class="preview">
  <h2>箍筋图</h2>
  <svg viewBox="0 0 252 242"><rect width="252" height="242" fill="#000"/><path d="M54.500 12.500H214.500V192.500H54.500Z" fill="none" stroke="#fff"/><path d="M63 21H206V183H63Z" fill="none" stroke="#f00" stroke-width="2"/><g fill="#f00"><circle cx="66" cy="24" r="4"/><circle cx="202" cy="24" r="4.500"/><circle cx="202" cy="179" r="4.500"/></g><path d="M192 30L201 22M197 36L206 27" stroke="#f00" stroke-width="2"/><path d="M60 55L64 53L72 50" fill="none" stroke="#fff"/><circle cx="63" cy="54" r="2.500" fill="#fff"/><text x="70" y="49" fill="#fff" font-size="16">1#</text></svg>
</section>

<section class="dialog" role="dialog" aria-label="其它箍筋类型设置">
  <header><h2>其它箍筋类型设置</h2><button aria-label="关闭"><svg viewBox="0 0 12 12"><path d="M1 1L11 11M11 1L1 11" stroke="#111" fill="none"/></svg></button></header>
  <div class="dialog-body">
    <table>
      <colgroup><col class="d0"><col class="d1"><col class="d2"><col class="d3"></colgroup>
      <thead><tr><th></th><th class="hot">箍筋图号</th><th>箍筋信息</th><th>图形</th></tr></thead>
      <tbody><tr><th>1</th><td class="code">253</td><td class="info"><svg class="rebar"><use href="#rebar"/></svg>6@200</td><td class="shape"><svg viewBox="0 0 200 40"><text x="50" y="22" font-size="11">160</text><path d="M77.500 4V29M74 3L81 9M74 9L81 3M74 25L81 31M74 31L81 25" fill="none" stroke="#000"/><path d="M85 26L103.500 8L122 26Z" fill="none" stroke="#000" stroke-width="2"/><text x="100" y="37" font-size="11">160</text></svg></td></tr></tbody>
    </table>
  </div>
  <div class="dialog-foot"><button>新建</button><button>删除</button><button>复制</button><button class="ok">确定</button><button>取消</button></div>
</section>
</body>
</html>
```
FILE: styles.css
```css
* { box-sizing: border-box; }
body {
  margin: 0; height: 100vh; display: flex; flex-direction: column; overflow: hidden; position: relative;
  background: #f0f0f0; color: #000; font: 12px/16px "Open Sans", "Noto Sans CJK SC", sans-serif;
}
button, input, select { font: inherit; color: inherit; border: 0; background: none; padding: 0; margin: 0; }
button { display: flex; align-items: center; white-space: nowrap; }
h1, h2, ul { margin: 0; padding: 0; font-size: inherit; font-weight: normal; list-style: none; }
svg { display: block; flex: none; }
.sprite { position: absolute; width: 0; height: 0; }
.i14 { width: 14px; height: 16px; }
.i16 { width: 16px; height: 16px; }
.i18 { width: 18px; height: 16px; }
.caret { border: 3px solid transparent; border-top-color: currentColor; border-bottom: 0; margin-left: 4px; flex: none; }
.caret.wide { margin-left: 6px; }
.sep { width: 1px; height: 22px; background: #b4b4b4; flex: none; }
.more { align-self: flex-start; padding-top: 4px; }
.more svg { width: 8px; height: 6px; fill: none; stroke: #000; stroke-width: 1.5; }

.titlebar { display: flex; align-items: center; height: 23px; background: #fff; padding-left: 2px; gap: 5px; color: #8c8c8c; flex: none; }
.titlebar h1 { font: 13px/16px Roboto, "Noto Sans CJK SC", sans-serif; white-space: nowrap; }
.winbtns { margin-left: auto; display: flex; gap: 34px; padding-right: 18px; }
.winbtns svg { width: 12px; height: 12px; fill: none; stroke: #888; }

.menubar { display: flex; align-items: center; height: 30px; padding: 0 5px 0 7px; gap: 11px; flex: none; background: linear-gradient(90deg, #ededed, #f8f8f8); }
.menubar button { gap: 3px; }
.menubar .change { margin: 0 -5px 0 5px; }
.tip { color: #633000; text-decoration: none; padding-left: 24px; white-space: nowrap; }
.account { margin-left: auto; display: flex; align-items: center; gap: 9px; padding-right: 27px; white-space: nowrap; }
.bell { width: 12px; height: 16px; }

.toolbar { display: flex; align-items: center; flex: none; background: linear-gradient(#fbfbfb, #eee); }
.toolbar button { gap: 4px; }
.toolbar .caret { margin-left: 0; }
.toolbar .caret.wide { margin-left: 3px; }
.toolbar button:disabled, .toolbar select:disabled { color: #7c7c7c; opacity: 1; }
.main-tools { height: 30px; margin-top: 1px; }
.group { display: flex; align-items: center; height: 30px; gap: 7px; }
.files { padding-left: 4px; gap: 8px; }
.files .more { margin-left: 6px; }
.edit { margin-left: 8px; }
.edit .more { margin-left: 32px; }
.sigma { font: bold 14px "Liberation Serif", serif; width: 14px; text-align: center; }
.view { margin-left: 8px; padding-right: 5px; flex: 1; }
.view .sep { margin: 0 -2px; }
.view > .more { margin-left: auto; }
.viewsel { display: flex; align-items: center; gap: 4px; border: 1px solid #777; height: 23px; padding: 0 3px; width: 62px; margin-right: -3px; color: #7c7c7c; }
select { appearance: none; }
.viewsel select { width: 26px; }

.workspace { flex: 1; display: flex; min-height: 0; }
.modules { width: 197px; flex: none; display: flex; flex-direction: column; margin-bottom: 3px; }
.panel-head { display: flex; align-items: center; height: 16px; border: 1px solid #8b8b8b; border-left: 0; gap: 9px; padding-right: 3px; background: #f4f4f4; }
.panel-head h2 { font-size: 13px; flex: 1; }
.panel-head svg { width: 10px; height: 10px; fill: none; stroke: #111; }
.section { height: 22px; border: 1px solid #a0a0a0; justify-content: center; box-shadow: inset 1px 1px #fff; flex: none; border-top-color: #bbb; }
.tree-tools { display: flex; gap: 7px; height: 28px; padding: 6px 6px; background: linear-gradient(#fff, #f0f0f0); border: 1px solid #b5b5b5; margin-top: 1px; flex: none; }
.tree-tools svg { width: 16px; height: 16px; }
.tree-box { flex: 1; min-height: 0; display: flex; background: #fff; border: 2px solid #8e9096; border-width: 1px 1px 1px 2px; margin-bottom: 1px; overflow: hidden; }
.tree { flex: 1; overflow: hidden; font-family: "Liberation Serif", "Noto Sans CJK SC", serif; }
.tree li { display: flex; align-items: center; height: 16px; white-space: nowrap; }
.tree svg { width: 16px; height: 16px; }
.leaf {
  padding-left: 43px; gap: 5px;
  background:
    repeating-linear-gradient(#888 0 1px, transparent 1px 2px) 13px 0 / 1px 100% no-repeat,
    repeating-linear-gradient(#888 0 1px, transparent 1px 2px) 32px 0 / 1px 100% no-repeat,
    repeating-linear-gradient(90deg, #888 0 1px, transparent 1px 2px) 32px 8px / 11px 1px no-repeat;
}
.leaf.last { background-size: 1px 100%, 1px 8px, 11px 1px; }
.current { display: flex; align-items: center; gap: 5px; background: #d9d9d9; padding-right: 5px; }
.branch { padding-left: 9px; gap: 5px; }
.branch i, .root i { width: 6px; height: 6px; border: solid #444; border-width: 0 2px 2px 0; transform: rotate(45deg); margin: 0 4px 3px 1px; flex: none; }
.branch.closed i { transform: rotate(-45deg); border-color: #aaa; margin: 0 5px 0 0; }
.branch svg { margin-left: -1px; }
.scroll { width: 15px; background: #f0f0f0; display: flex; flex-direction: column; align-items: center; justify-content: space-between; padding: 6px 0; margin-right: 1px; }
.scroll svg { width: 10px; height: 8px; fill: none; stroke: #555; stroke-width: 2; }
.thumb { width: 15px; flex: 0 0 48%; margin-bottom: 166px; background: #cdcdcd; }

.content { flex: 1; min-width: 0; margin-left: 6px; display: flex; flex-direction: column; }
.comp-tools { height: 28px; gap: 7px; padding-left: 4px; }
.comp-tools .sep { margin: 0 -1px; }
.floor { display: flex; align-items: center; gap: 5px; margin-left: -2px; }
.combo { display: flex; align-items: center; background: #fff; width: 62px; height: 22px; padding: 0 3px 0 4px; margin-right: -4px; }
.combo select { flex: 1; }
.move svg { width: 10px; height: 12px; margin-right: 4px; }
.panes { flex: 1; display: flex; min-height: 0; gap: 4px; padding-top: 1px; }
.components { width: 183px; flex: none; display: flex; flex-direction: column; margin: 2px 0 3px; border-right: 1px solid #888; }
.search { display: flex; height: 25px; gap: 1px; padding: 1px; }
.search input { flex: 1; min-width: 0; border: 1px solid #777; background: #fff; padding: 0 2px 3px; }
.search button { width: 23px; background: #fcfcfc; justify-content: center; }
.search svg { width: 16px; height: 16px; }
::placeholder { color: #808080; opacity: 1; }
.comp-tree { flex: 1; border: 1px solid #868a92; background: #fff; padding-top: 1px; margin-top: 2px; font-family: "Liberation Serif", "Noto Sans CJK SC", serif; }
.comp-tree li { display: flex; height: 16px; padding-left: 40px; background: repeating-linear-gradient(#888 0 1px, transparent 1px 2px) 31px 0 / 1px 100% no-repeat, repeating-linear-gradient(90deg, #888 0 1px, transparent 1px 2px) 31px 8px / 9px 1px no-repeat; }
.comp-tree li.last { background-size: 1px 8px, 9px 1px; }
.comp-tree li.root { background: none; align-items: center; padding-left: 7px; gap: 4px; }
.root i { border-color: #27b8ec; }
.root svg { width: 16px; height: 16px; }
.comp-tree span { display: flex; align-items: center; gap: 7px; padding: 0 3px; }
.comp-tree span svg { width: 12px; height: 12px; }
.comp-tree .sel { background: #316ac5; }

.editor { flex: 1; min-width: 0; display: flex; flex-direction: column; }
.tabs { height: 20px; display: flex; border-bottom: 1px solid #d5d5d5; flex: none; }
.tab { background: #fff; border: 1px solid #d5d5d5; border-bottom: 0; padding: 0 7px; height: 20px; }
.sheet { flex: 1; min-height: 0; background: #fff; border: 1px solid #d5d5d5; border-top: 0; margin: 0 2px 3px 0; padding: 3px 2px 3px 3px; }
.sheet-in { height: 100%; border: 1px solid #a4a7ae; position: relative; }
table { border-collapse: collapse; table-layout: fixed; }
.props { width: 370px; color: #000; font: 11px/14px "Liberation Sans", "Noto Sans CJK SC", sans-serif; }
.c-no { width: 22px; } .c-name { width: 191px; } .c-val { width: 126px; } .c-add { width: 31px; }
th, td { border: 1px solid #c0c0c0; padding: 0; font-weight: normal; white-space: nowrap; }
th { background: linear-gradient(#fff, #eee); }
tr > :first-child { border-left: 0; }
thead th { border-top: 0; height: 24px; font-size: 12px; }
th.hot { background: linear-gradient(#fadb9c, #f0bf60); color: #580058; }
.props td, tbody th { height: 19px; }
.props td { padding-left: 2px; text-align: left; }
.props td:nth-child(2), .props td.zh { font-size: 12px; }
.props td:last-child { padding: 0; }
.props td.n { padding-left: 19px; }
.props td.g { padding-left: 3px; }
.props td.g button { display: inline-flex; width: 13px; height: 13px; border: 1px solid #b0b0b0; justify-content: center; margin-right: 3px; color: #000; line-height: 9px; vertical-align: -2px; }
.props td.s { padding-left: 29px; background: linear-gradient(#bbb, #bbb) 9px 0 / 1px 100% no-repeat, linear-gradient(#bbb, #bbb) 9px 9px / 16px 1px no-repeat; }
.props td.end { background-size: 1px 10px, 16px 1px; }
.props td.blue { color: #00f; }
.props td.gray { color: #888; }
small { font: 11px "Liberation Sans", sans-serif; }
.props input { appearance: none; display: block; width: 13px; height: 13px; border: 1px solid #222; background: #fff; margin: 0 auto; }
.active th, .dialog tbody th { background: #ffd58c; color: #580058; }
.props .active td.s { background-color: #0078d7; color: #fff; }
.active td:nth-child(3) { background: #d8e9f8; }
.rebar { display: inline-block; width: 10px; height: 12px; vertical-align: -2px; margin: 0 1px; }
.mark { position: absolute; left: 122px; top: 177px; width: 248px; height: 92px; pointer-events: none; }

.status { display: flex; gap: 2px; height: 20px; flex: none; white-space: nowrap; }
.status span { border: 1px solid #d0d0d0; background: linear-gradient(#fff, #f0f0f0); padding-left: 1px; line-height: 18px; }
.s1 { width: 148px; } .s2 { width: 78px; } .s3 { width: 98px; } .s4 { width: 48px; } .s5 { flex: 1; } .s6 { width: 70px; font-family: "Liberation Serif", serif; }

.taskbar { display: flex; height: 40px; flex: none; background: #000a0d; color: #fff; align-items: stretch; }
.start { width: 48px; flex: none; justify-content: center; background: #000; }
.start svg { width: 16px; height: 16px; }
.cortana { width: 344px; flex: none; background: #333; display: flex; align-items: center; padding: 0 14px 0 9px; gap: 5px; }
.ring { width: 22px; height: 22px; }
.cortana input { flex: 1; min-width: 0; font-size: 14px; height: 24px; }
.cortana ::placeholder { color: #a0a0a0; }
.mic { width: 12px; height: 18px; }
.apps { display: flex; flex: 0 0 580px; }
.apps button { flex: 1; justify-content: center; border-bottom: 3px solid transparent; padding-top: 3px; }
.apps svg { width: 24px; height: 24px; }
.apps button:nth-child(3) svg { width: 32px; height: 32px; }
.apps .run { border-image: linear-gradient(90deg, transparent 10%, #76b9ed 10% 90%, transparent 90%) 3; }
.apps .on { background: #343b40; border-image: none; border-color: #76b9ed; }
.cpu, .clock { display: flex; flex-direction: column; justify-content: center; text-align: center; white-space: nowrap; line-height: 17px; }
.cpu { width: 84px; flex: none; }
.tray { display: flex; align-items: center; justify-content: space-between; width: 174px; flex: none; }
.tray svg { width: 16px; height: 16px; fill: none; stroke: #fff; stroke-width: 1.2; }
.tray .kb { width: 24px; }
.tray .sg { stroke: none; }
.ime { font-size: 14px; }
.clock { flex: 1; }
.notice { width: 46px; flex: none; position: relative; justify-content: center; padding-right: 12px; border-right: 1px solid #555; margin-right: 4px; }
.notice svg { width: 18px; height: 18px; }
.notice b { position: absolute; right: 10px; top: 17px; width: 20px; height: 20px; border-radius: 50%; background: #333; border: 1px solid #888; line-height: 18px; font-size: 11px; text-align: center; }

.imebar { position: absolute; left: 880px; top: 3px; width: 173px; height: 24px; display: flex; align-items: center; gap: 6px; padding-left: 22px; background: #fff; border: 1px solid #aec7dc; color: #1f74c4; }
.imebar svg { width: 16px; height: 16px; }
.imebar b { font-size: 14px; }
.imebar .sglogo { position: absolute; left: -14px; top: -5px; width: 28px; height: 28px; }
.imebar::before { content: ""; position: absolute; left: -16px; top: -4px; width: 48px; height: 6px; background: #5bbf4c; border-radius: 0 0 24px 24px; }

.preview { position: absolute; left: 1070px; top: 137px; width: 269px; height: 283px; border: 1px solid #444; background: linear-gradient(#bccbdb, #d7e3f0 25px); box-shadow: inset 0 0 0 1px #eef3f8; padding: 10px 7px 7px; }
.preview h2 { color: #999; height: 20px; }
.preview svg { width: 253px; height: 243px; border: 1px solid #aaa; border-color: #fff #aaa #aaa #fff; font-family: "Liberation Sans", sans-serif; }

.dialog { position: absolute; left: 816px; top: 247px; width: 456px; height: 349px; display: flex; flex-direction: column; background: #f0f0f0; border: 1px solid #3d8ee0; box-shadow: 0 3px 14px rgba(0, 0, 0, .35); }
.dialog header { display: flex; align-items: center; justify-content: space-between; background: #fff; height: 25px; padding: 0 9px 0 3px; }
.dialog header svg { width: 12px; height: 12px; }
.dialog-body { flex: 1; background: #fff; border: 1px solid #aaa; padding: 1px 0 0 1px; }
.dialog table { width: 404px; font: 11px/14px "Liberation Sans", "Noto Sans CJK SC", sans-serif; }
.d0 { width: 20px; } .d1 { width: 61px; } .d2 { width: 121px; } .d3 { width: 201px; }
.dialog thead th { height: 19px; }
.dialog tbody td { height: 41px; }
.dialog .code { background: #d8e9f8; text-align: center; }
.dialog .info { padding-left: 3px; }
.shape svg { width: 200px; height: 40px; }
.dialog-foot { display: flex; gap: 7px; padding: 8px 12px 8px 5px; height: 41px; }
.dialog-foot button { width: 73px; height: 24px; border: 1px solid #adadad; background: #e1e1e1; justify-content: center; }
.dialog-foot .ok { margin-left: auto; border: 2px solid #0078d7; }
```
